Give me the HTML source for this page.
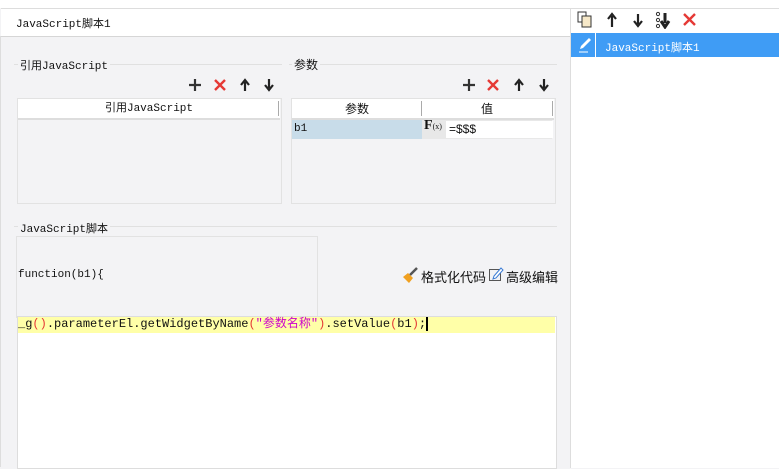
<!DOCTYPE html>
<html><head><style>
body{margin:0;width:779px;height:467px;overflow:hidden;background:#f3f3f5;font-family:"Liberation Mono","Noto Sans CJK SC",monospace;font-size:11px;position:relative;color:#111}
.a{position:absolute}
.cn{font-family:"Liberation Sans","Noto Sans CJK SC",sans-serif}
</style></head><body>
<div class="a" style="left:0;top:0;width:779px;height:8px;background:#fff"></div>
<div class="a" style="left:1px;top:8px;width:569px;height:27px;background:#fff;border-top:1px solid #ddd;border-bottom:1px solid #d6d6d6"></div>
<div class="a" style="left:16px;top:15px">JavaScript脚本1</div>
<div class="a" style="left:0;top:36px;width:1px;height:431px;background:#ddd"></div>
<div class="a" style="left:14px;top:64px;width:268px;height:1px;background:#e0e0e0"></div>
<div class="a" style="left:18px;top:57px;background:#f3f3f5;padding:0 2px">引用JavaScript</div>
<div class="a" style="left:289px;top:64px;width:268px;height:1px;background:#e0e0e0"></div>
<div class="a cn" style="left:292px;top:56px;background:#f3f3f5;padding:0 2px;font-size:12px">参数</div>
<svg class="a" style="left:186px;top:77px" width="90" height="16"><g stroke="#333" stroke-width="2.2" fill="none"><path d="M3 8h12M9 2v12"/></g><path d="M29 3l10 10M39 3l-10 10" stroke="#e53935" stroke-width="2.4"/><path d="M59 14V5M55 8l4-5 4 5" stroke="#222" stroke-width="2.2" fill="none"/><path d="M83 2v9M79 8l4 5 4-5" stroke="#222" stroke-width="2.2" fill="none"/></svg>
<svg class="a" style="left:460px;top:77px" width="90" height="16"><g stroke="#333" stroke-width="2.2" fill="none"><path d="M3 8h12M9 2v12"/></g><path d="M28 3l10 10M38 3l-10 10" stroke="#e53935" stroke-width="2.4"/><path d="M59 14V5M55 8l4-5 4 5" stroke="#222" stroke-width="2.2" fill="none"/><path d="M84 2v9M80 8l4 5 4-5" stroke="#222" stroke-width="2.2" fill="none"/></svg>
<div class="a" style="left:17px;top:98px;width:263px;height:104px;border:1px solid #e2e2e2;background:#f3f3f5"></div>
<div class="a" style="left:18px;top:99px;width:262px;height:19px;background:#fff;border-bottom:2px solid #ddd;text-align:center;line-height:21px">引用JavaScript</div>
<div class="a" style="left:278px;top:101px;width:1px;height:15px;background:#aaa"></div>
<div class="a" style="left:291px;top:98px;width:263px;height:104px;border:1px solid #e2e2e2;background:#f3f3f5"></div>
<div class="a cn" style="left:292px;top:99px;width:262px;height:19px;background:#fff;border-bottom:2px solid #ddd"></div>
<div class="a cn" style="left:292px;top:100px;width:130px;text-align:center;line-height:19px;font-size:12px">参数</div>
<div class="a cn" style="left:422px;top:100px;width:130px;text-align:center;line-height:19px;font-size:12px">值</div>
<div class="a" style="left:421px;top:101px;width:1px;height:15px;background:#aaa"></div>
<div class="a" style="left:552px;top:101px;width:1px;height:15px;background:#aaa"></div>
<div class="a" style="left:292px;top:120px;width:130px;height:19px;background:#c8dce9;line-height:19px;padding-left:2px">b1</div>
<div class="a" style="left:422px;top:120px;width:130px;height:19px;background:#e8e8e8"></div>
<div class="a" style="left:424px;top:118px;font-family:'Liberation Serif',serif;font-weight:bold;font-size:14px">F<span style="font-size:8px;font-weight:normal">(x)</span></div>
<div class="a" style="left:446px;top:121px;width:104px;height:17px;background:#fff;line-height:17px;padding-left:3px;font-family:'Liberation Sans',sans-serif;font-size:12px">=$$$</div>
<div class="a" style="left:14px;top:226px;width:543px;height:1px;background:#e0e0e0"></div>
<div class="a" style="left:18px;top:220px;background:#f3f3f5;padding:0 2px">JavaScript脚本</div>
<div class="a" style="left:16px;top:236px;width:300px;height:80px;border:1px solid #e2e2e2"></div>
<div class="a" style="left:18px;top:269px">function(b1){</div>
<svg class="a" style="left:401px;top:266px" width="18" height="18"><path d="M9 9l7-7" stroke="#555" stroke-width="2.5"/><path d="M2 11l5-4 5 5-4 5z" fill="#f0a020"/></svg>
<svg class="a" style="left:488px;top:266px" width="16" height="16"><rect x="1.5" y="3.5" width="11" height="11" fill="none" stroke="#555"/><path d="M6 10l7-8 2 2-7 8-3 1z" fill="#fff" stroke="#3a7bd5"/></svg>
<div class="a cn" style="left:421px;top:267px;font-size:13px">格式化代码</div>
<div class="a cn" style="left:506px;top:267px;font-size:13px">高级编辑</div>
<div class="a" style="left:17px;top:316px;width:538px;height:151px;background:#fff;border:1px solid #ddd"></div>
<div class="a" style="left:18px;top:317px;width:537px;height:16px;background:#ffffa8"></div>
<div class="a" style="left:18px;top:316px;line-height:16px;font-size:12px">_g<span style="color:#e53935">()</span>.parameterEl.getWidgetByName<span style="color:#e53935">(</span><span style="color:#c0c">"参数名称"</span><span style="color:#e53935">)</span>.setValue<span style="color:#e53935">(</span>b1<span style="color:#e53935">)</span>;<span style="display:inline-block;width:2px;height:14px;background:#000;vertical-align:middle"></span></div>
<div class="a" style="left:570px;top:8px;width:209px;height:459px;background:#fff;border-left:1px solid #ddd;border-top:1px solid #ddd"></div>
<svg class="a" style="left:576px;top:11px" width="125" height="18"><rect x="2" y="1" width="8" height="10" fill="#fff" stroke="#333"/><rect x="6" y="5" width="9" height="11" fill="#f6e8c8" stroke="#333"/><path d="M36 16V5M32 8l4-5 4 5" stroke="#222" stroke-width="2.2" fill="none"/><path d="M62 3v10M58 10l4 5 4-5" stroke="#222" stroke-width="2.2" fill="none"/><circle cx="82" cy="3" r="1.6" fill="none" stroke="#333"/><circle cx="82" cy="9" r="1.6" fill="none" stroke="#333"/><circle cx="82" cy="15" r="1.6" fill="none" stroke="#333"/><path d="M89 2v10M85 10l4 6 4-6" stroke="#222" stroke-width="3" fill="none"/><path d="M108 3l11 11M119 3l-11 11" stroke="#e53935" stroke-width="2.4"/></svg>
<div class="a" style="left:571px;top:33px;width:208px;height:24px;background:#3f9cf5"></div>
<div class="a" style="left:595px;top:33px;width:1px;height:24px;background:#fff"></div>
<svg class="a" style="left:577px;top:37px" width="16" height="16"><path d="M3 12l1-3 8-8 2 2-8 8z" fill="#fff"/><path d="M2 15h9" stroke="#fff"/></svg>
<div class="a" style="left:605px;top:39px;color:#fff">JavaScript脚本1</div>
</body></html>
